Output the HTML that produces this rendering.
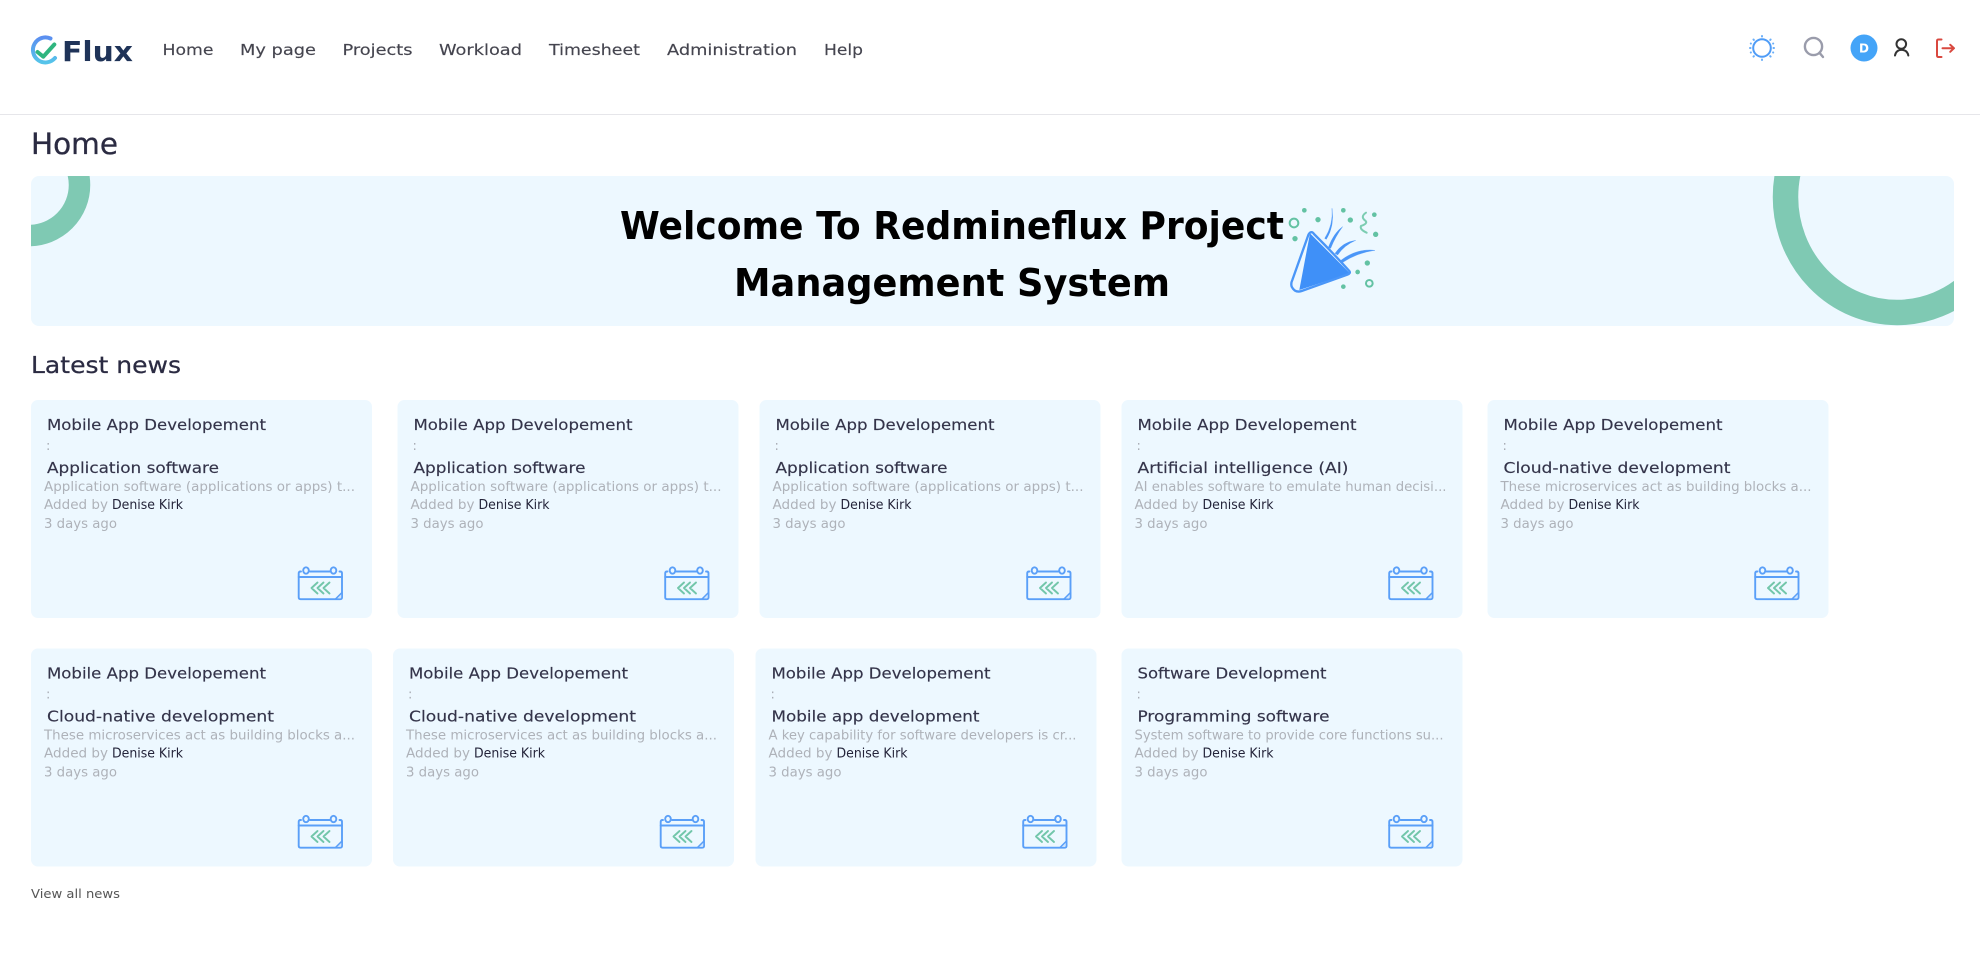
<!DOCTYPE html>
<html lang="en">
<head>
<meta charset="utf-8">
<title>Home - Redmineflux</title>
<style>
html,body{margin:0;padding:0;background:#fff;width:1980px;height:971px;overflow:hidden}
svg{display:block}
text{font-family:"DejaVu Sans","Liberation Sans",sans-serif}
.nav{font-size:15.5px;fill:#45454f;stroke:#45454f;stroke-width:.15}
.t{font-size:15px;fill:#34344a;stroke:#34344a;stroke-width:.15}
.c{font-size:13px;fill:#a9adb5}
.d{font-size:13px;fill:#aeb2b9}
.n{font-size:13px;fill:#24243a}
.s{fill:none;stroke:#5a9ff8;stroke-width:1.9;stroke-linecap:round;stroke-linejoin:round}
.g{fill:none;stroke:#72c6aa;stroke-width:1.9;stroke-linecap:round;stroke-linejoin:round}
.dot{fill:#63c2a3}
</style>
</head>
<body>
<svg xmlns="http://www.w3.org/2000/svg" width="1980" height="971" viewBox="0 0 1980 971">
<defs>
<clipPath id="ban"><rect x="31" y="176" width="1923" height="150" rx="8"/></clipPath>
<linearGradient id="lg" x1="0" y1="0" x2="0" y2="1"><stop offset="0" stop-color="#5b8ff0"/><stop offset="1" stop-color="#56c4ea"/></linearGradient>
<g id="cal">
<path class="s" d="M3 4.5H2.5Q.7 4.5 .7 6.3V30.3Q.7 32.2 2.5 32.2H42.2Q44 32.2 44 30.3V6.3Q44 4.5 42.2 4.5H41.5"/>
<path class="s" d="M12 4.5H32M.7 10H44"/>
<ellipse class="s" cx="8" cy="3.5" rx="2.8" ry="3.2"/>
<ellipse class="s" cx="35.5" cy="3.5" rx="2.8" ry="3.2"/>
<path d="M37.5 32L44 25.5V30.3Q44 32.2 42.2 32.2Z" fill="#cfe5fd" stroke="#5a9ff8" stroke-width="1.5" stroke-linejoin="round"/>
<path class="g" d="M19.5 15.5L13.5 21L19.5 26.5M25.5 15.5L19.5 21L25.5 26.5M31.5 15.5L25.5 21L31.5 26.5"/>
</g>
</defs>

<!-- Header -->
<path d="M50.5 38.5A12.5 12.5 0 1 0 55 58" fill="none" stroke="url(#lg)" stroke-width="4" stroke-linecap="round"/>
<path d="M37.5 52L43.3 56.7L54.3 44.5" fill="none" stroke="#2fb57f" stroke-width="4" stroke-linecap="round" stroke-linejoin="round"/>
<text x="62" y="61" font-size="28" font-weight="700" fill="#1f3358" textLength="71" lengthAdjust="spacingAndGlyphs">Flux</text>

<text class="nav" x="162.5" y="55" textLength="51" lengthAdjust="spacingAndGlyphs">Home</text>
<text class="nav" x="240" y="55" textLength="76" lengthAdjust="spacingAndGlyphs">My page</text>
<text class="nav" x="342.5" y="55" textLength="70" lengthAdjust="spacingAndGlyphs">Projects</text>
<text class="nav" x="439" y="55" textLength="83" lengthAdjust="spacingAndGlyphs">Workload</text>
<text class="nav" x="549" y="55" textLength="91" lengthAdjust="spacingAndGlyphs">Timesheet</text>
<text class="nav" x="667" y="55" textLength="130" lengthAdjust="spacingAndGlyphs">Administration</text>
<text class="nav" x="824" y="55" textLength="39" lengthAdjust="spacingAndGlyphs">Help</text>

<!-- Sun -->
<circle cx="1762" cy="48" r="8.8" fill="none" stroke="#4f9cf7" stroke-width="2"/>
<g stroke="#6aaef8" stroke-width="2" stroke-linecap="round">
<path d="M1762 36v.5M1762 59.5v.5M1750 48h.5M1773.5 48h.5M1753.5 39.5l.4.4M1770.2 56.2l.4.4M1770.6 39.5l-.4.4M1753.9 56.2l-.4.4M1750.8 43.5l.1.1M1750.8 52.5l.1-.1M1773.2 43.5l-.1.1M1773.2 52.5l-.1-.1"/>
</g>
<!-- Search -->
<circle cx="1813.5" cy="46.5" r="8.6" fill="none" stroke="#9a9cab" stroke-width="2.4"/>
<path d="M1819.5 52.8L1823 57" stroke="#9a9cab" stroke-width="2.4" stroke-linecap="round"/>
<!-- Avatar -->
<circle cx="1864" cy="48" r="13.5" fill="#44a4f8"/>
<text x="1864" y="52.5" font-size="12" font-weight="700" fill="#fff" text-anchor="middle">D</text>
<!-- User -->
<circle cx="1901.3" cy="44" r="4.8" fill="none" stroke="#333" stroke-width="2"/>
<path d="M1895 55.5Q1896 50.2 1901.5 49.8Q1907.5 50.2 1908.3 55.5" fill="none" stroke="#333" stroke-width="2" stroke-linecap="round"/>
<!-- Logout -->
<path d="M1941.5 39.5H1938.5Q1937 39.5 1937 41V55.5Q1937 57 1938.5 57H1941.5" fill="none" stroke="#d9483f" stroke-width="2" stroke-linecap="round"/>
<path d="M1942.5 48.2H1954M1950.2 44.8L1954 48.2L1950.2 51.8" fill="none" stroke="#d9483f" stroke-width="2" stroke-linecap="round" stroke-linejoin="round"/>

<rect x="0" y="114" width="1980" height="1" fill="#e6e6ea"/>

<text x="31" y="154" font-size="29" fill="#2b2b42" stroke="#2b2b42" stroke-width=".3" textLength="87" lengthAdjust="spacingAndGlyphs">Home</text>

<!-- Banner -->
<rect x="31" y="176" width="1923" height="150" rx="8" fill="#edf8ff"/>
<g clip-path="url(#ban)" fill="none" stroke="#7fc9b3">
<circle cx="29" cy="185" r="50.5" stroke-width="21.5"/>
<ellipse cx="1897" cy="197" rx="111.5" ry="115.5" stroke-width="25.5"/>
</g>
<text x="620" y="239" font-size="38" font-weight="700" fill="#000" textLength="664" lengthAdjust="spacingAndGlyphs">Welcome To Redmineflux Project</text>
<text x="734" y="296" font-size="38" font-weight="700" fill="#000" textLength="436" lengthAdjust="spacingAndGlyphs">Management System</text>

<!-- Popper -->
<g transform="translate(1260 190) scale(.3333)">
<path d="M150 130L118 300L270 250Z" fill="#3f90f8"/>
<path d="M150 128Q157 124 162 132Q220 190 268 243Q273 250 262 254L125 303Q105 310 95 290Q92 280 97 270L145 135Q147 130 150 128Z" fill="none" stroke="#4a96f8" stroke-width="7" stroke-linejoin="round"/>
<g fill="#4a96f8" stroke="#4a96f8" stroke-width="1" stroke-linejoin="round">
<path d="M216 55Q220 105 194 145L199 148Q224 108 216 55Z"/>
<path d="M248 110Q222 128 205 172L212 175Q226 140 248 110Z"/>
<path d="M287 151Q248 156 225 190L233 195Q252 166 287 151Z"/>
<path d="M345 181Q290 174 240 213L247 218Q292 188 345 181Z"/>
</g>
<circle cx="102" cy="99" r="13" fill="none" stroke="#63c2a3" stroke-width="6"/>
<circle cx="328" cy="280" r="10" fill="none" stroke="#63c2a3" stroke-width="6"/>
<path d="M318 68Q300 80 316 92Q325 100 303 108Q298 118 320 128" fill="none" stroke="#7ccdb2" stroke-width="6" stroke-linecap="round"/>
<circle class="dot" cx="133" cy="61" r="7"/><circle class="dot" cx="174" cy="89" r="8"/><circle class="dot" cx="105" cy="146" r="8"/>
<circle class="dot" cx="250" cy="61" r="7"/><circle class="dot" cx="271" cy="90" r="8"/><circle class="dot" cx="343" cy="74" r="7"/>
<circle class="dot" cx="347" cy="133" r="8"/><circle class="dot" cx="322" cy="219" r="8"/><circle class="dot" cx="293" cy="246" r="7"/><circle class="dot" cx="250" cy="290" r="7"/>
</g>

<text x="31" y="373" font-size="23" fill="#2b2b42" stroke="#2b2b42" stroke-width=".25" textLength="150" lengthAdjust="spacingAndGlyphs">Latest news</text>

<!-- Row 1 -->
<g transform="translate(31 400)">
<rect width="341" height="218" rx="7" fill="#edf8ff"/>
<text class="t" x="16" y="30" textLength="219" lengthAdjust="spacingAndGlyphs">Mobile App Developement</text>
<text class="c" x="15" y="50">:</text>
<text class="t" x="16" y="73" textLength="172" lengthAdjust="spacingAndGlyphs">Application software</text>
<text class="d" x="13" y="91" textLength="311" lengthAdjust="spacingAndGlyphs">Application software (applications or apps) t...</text>
<text class="d" x="13" y="109" textLength="64" lengthAdjust="spacingAndGlyphs">Added by</text>
<text class="n" x="81" y="109" textLength="71" lengthAdjust="spacingAndGlyphs">Denise Kirk</text>
<text class="d" x="13" y="128" textLength="73" lengthAdjust="spacingAndGlyphs">3 days ago</text>
<use href="#cal" x="267" y="167"/>
</g>
<g transform="translate(397.5 400)">
<rect width="341" height="218" rx="7" fill="#edf8ff"/>
<text class="t" x="16" y="30" textLength="219" lengthAdjust="spacingAndGlyphs">Mobile App Developement</text>
<text class="c" x="15" y="50">:</text>
<text class="t" x="16" y="73" textLength="172" lengthAdjust="spacingAndGlyphs">Application software</text>
<text class="d" x="13" y="91" textLength="311" lengthAdjust="spacingAndGlyphs">Application software (applications or apps) t...</text>
<text class="d" x="13" y="109" textLength="64" lengthAdjust="spacingAndGlyphs">Added by</text>
<text class="n" x="81" y="109" textLength="71" lengthAdjust="spacingAndGlyphs">Denise Kirk</text>
<text class="d" x="13" y="128" textLength="73" lengthAdjust="spacingAndGlyphs">3 days ago</text>
<use href="#cal" x="267" y="167"/>
</g>
<g transform="translate(759.5 400)">
<rect width="341" height="218" rx="7" fill="#edf8ff"/>
<text class="t" x="16" y="30" textLength="219" lengthAdjust="spacingAndGlyphs">Mobile App Developement</text>
<text class="c" x="15" y="50">:</text>
<text class="t" x="16" y="73" textLength="172" lengthAdjust="spacingAndGlyphs">Application software</text>
<text class="d" x="13" y="91" textLength="311" lengthAdjust="spacingAndGlyphs">Application software (applications or apps) t...</text>
<text class="d" x="13" y="109" textLength="64" lengthAdjust="spacingAndGlyphs">Added by</text>
<text class="n" x="81" y="109" textLength="71" lengthAdjust="spacingAndGlyphs">Denise Kirk</text>
<text class="d" x="13" y="128" textLength="73" lengthAdjust="spacingAndGlyphs">3 days ago</text>
<use href="#cal" x="267" y="167"/>
</g>
<g transform="translate(1121.5 400)">
<rect width="341" height="218" rx="7" fill="#edf8ff"/>
<text class="t" x="16" y="30" textLength="219" lengthAdjust="spacingAndGlyphs">Mobile App Developement</text>
<text class="c" x="15" y="50">:</text>
<text class="t" x="16" y="73" textLength="211" lengthAdjust="spacingAndGlyphs">Artificial intelligence (AI)</text>
<text class="d" x="13" y="91" textLength="312" lengthAdjust="spacingAndGlyphs">AI enables software to emulate human decisi...</text>
<text class="d" x="13" y="109" textLength="64" lengthAdjust="spacingAndGlyphs">Added by</text>
<text class="n" x="81" y="109" textLength="71" lengthAdjust="spacingAndGlyphs">Denise Kirk</text>
<text class="d" x="13" y="128" textLength="73" lengthAdjust="spacingAndGlyphs">3 days ago</text>
<use href="#cal" x="267" y="167"/>
</g>
<g transform="translate(1487.5 400)">
<rect width="341" height="218" rx="7" fill="#edf8ff"/>
<text class="t" x="16" y="30" textLength="219" lengthAdjust="spacingAndGlyphs">Mobile App Developement</text>
<text class="c" x="15" y="50">:</text>
<text class="t" x="16" y="73" textLength="227" lengthAdjust="spacingAndGlyphs">Cloud-native development</text>
<text class="d" x="13" y="91" textLength="311" lengthAdjust="spacingAndGlyphs">These microservices act as building blocks a...</text>
<text class="d" x="13" y="109" textLength="64" lengthAdjust="spacingAndGlyphs">Added by</text>
<text class="n" x="81" y="109" textLength="71" lengthAdjust="spacingAndGlyphs">Denise Kirk</text>
<text class="d" x="13" y="128" textLength="73" lengthAdjust="spacingAndGlyphs">3 days ago</text>
<use href="#cal" x="267" y="167"/>
</g>

<!-- Row 2 -->
<g transform="translate(31 648.5)">
<rect width="341" height="218" rx="7" fill="#edf8ff"/>
<text class="t" x="16" y="30" textLength="219" lengthAdjust="spacingAndGlyphs">Mobile App Developement</text>
<text class="c" x="15" y="50">:</text>
<text class="t" x="16" y="73" textLength="227" lengthAdjust="spacingAndGlyphs">Cloud-native development</text>
<text class="d" x="13" y="91" textLength="311" lengthAdjust="spacingAndGlyphs">These microservices act as building blocks a...</text>
<text class="d" x="13" y="109" textLength="64" lengthAdjust="spacingAndGlyphs">Added by</text>
<text class="n" x="81" y="109" textLength="71" lengthAdjust="spacingAndGlyphs">Denise Kirk</text>
<text class="d" x="13" y="128" textLength="73" lengthAdjust="spacingAndGlyphs">3 days ago</text>
<use href="#cal" x="267" y="167"/>
</g>
<g transform="translate(393 648.5)">
<rect width="341" height="218" rx="7" fill="#edf8ff"/>
<text class="t" x="16" y="30" textLength="219" lengthAdjust="spacingAndGlyphs">Mobile App Developement</text>
<text class="c" x="15" y="50">:</text>
<text class="t" x="16" y="73" textLength="227" lengthAdjust="spacingAndGlyphs">Cloud-native development</text>
<text class="d" x="13" y="91" textLength="311" lengthAdjust="spacingAndGlyphs">These microservices act as building blocks a...</text>
<text class="d" x="13" y="109" textLength="64" lengthAdjust="spacingAndGlyphs">Added by</text>
<text class="n" x="81" y="109" textLength="71" lengthAdjust="spacingAndGlyphs">Denise Kirk</text>
<text class="d" x="13" y="128" textLength="73" lengthAdjust="spacingAndGlyphs">3 days ago</text>
<use href="#cal" x="267" y="167"/>
</g>
<g transform="translate(755.5 648.5)">
<rect width="341" height="218" rx="7" fill="#edf8ff"/>
<text class="t" x="16" y="30" textLength="219" lengthAdjust="spacingAndGlyphs">Mobile App Developement</text>
<text class="c" x="15" y="50">:</text>
<text class="t" x="16" y="73" textLength="208" lengthAdjust="spacingAndGlyphs">Mobile app development</text>
<text class="d" x="13" y="91" textLength="308" lengthAdjust="spacingAndGlyphs">A key capability for software developers is cr...</text>
<text class="d" x="13" y="109" textLength="64" lengthAdjust="spacingAndGlyphs">Added by</text>
<text class="n" x="81" y="109" textLength="71" lengthAdjust="spacingAndGlyphs">Denise Kirk</text>
<text class="d" x="13" y="128" textLength="73" lengthAdjust="spacingAndGlyphs">3 days ago</text>
<use href="#cal" x="267" y="167"/>
</g>
<g transform="translate(1121.5 648.5)">
<rect width="341" height="218" rx="7" fill="#edf8ff"/>
<text class="t" x="16" y="30" textLength="189" lengthAdjust="spacingAndGlyphs">Software Development</text>
<text class="c" x="15" y="50">:</text>
<text class="t" x="16" y="73" textLength="192" lengthAdjust="spacingAndGlyphs">Programming software</text>
<text class="d" x="13" y="91" textLength="309" lengthAdjust="spacingAndGlyphs">System software to provide core functions su...</text>
<text class="d" x="13" y="109" textLength="64" lengthAdjust="spacingAndGlyphs">Added by</text>
<text class="n" x="81" y="109" textLength="71" lengthAdjust="spacingAndGlyphs">Denise Kirk</text>
<text class="d" x="13" y="128" textLength="73" lengthAdjust="spacingAndGlyphs">3 days ago</text>
<use href="#cal" x="267" y="167"/>
</g>

<text x="31" y="898" font-size="12" fill="#555" textLength="89" lengthAdjust="spacingAndGlyphs">View all news</text>
</svg>
</body>
</html>
